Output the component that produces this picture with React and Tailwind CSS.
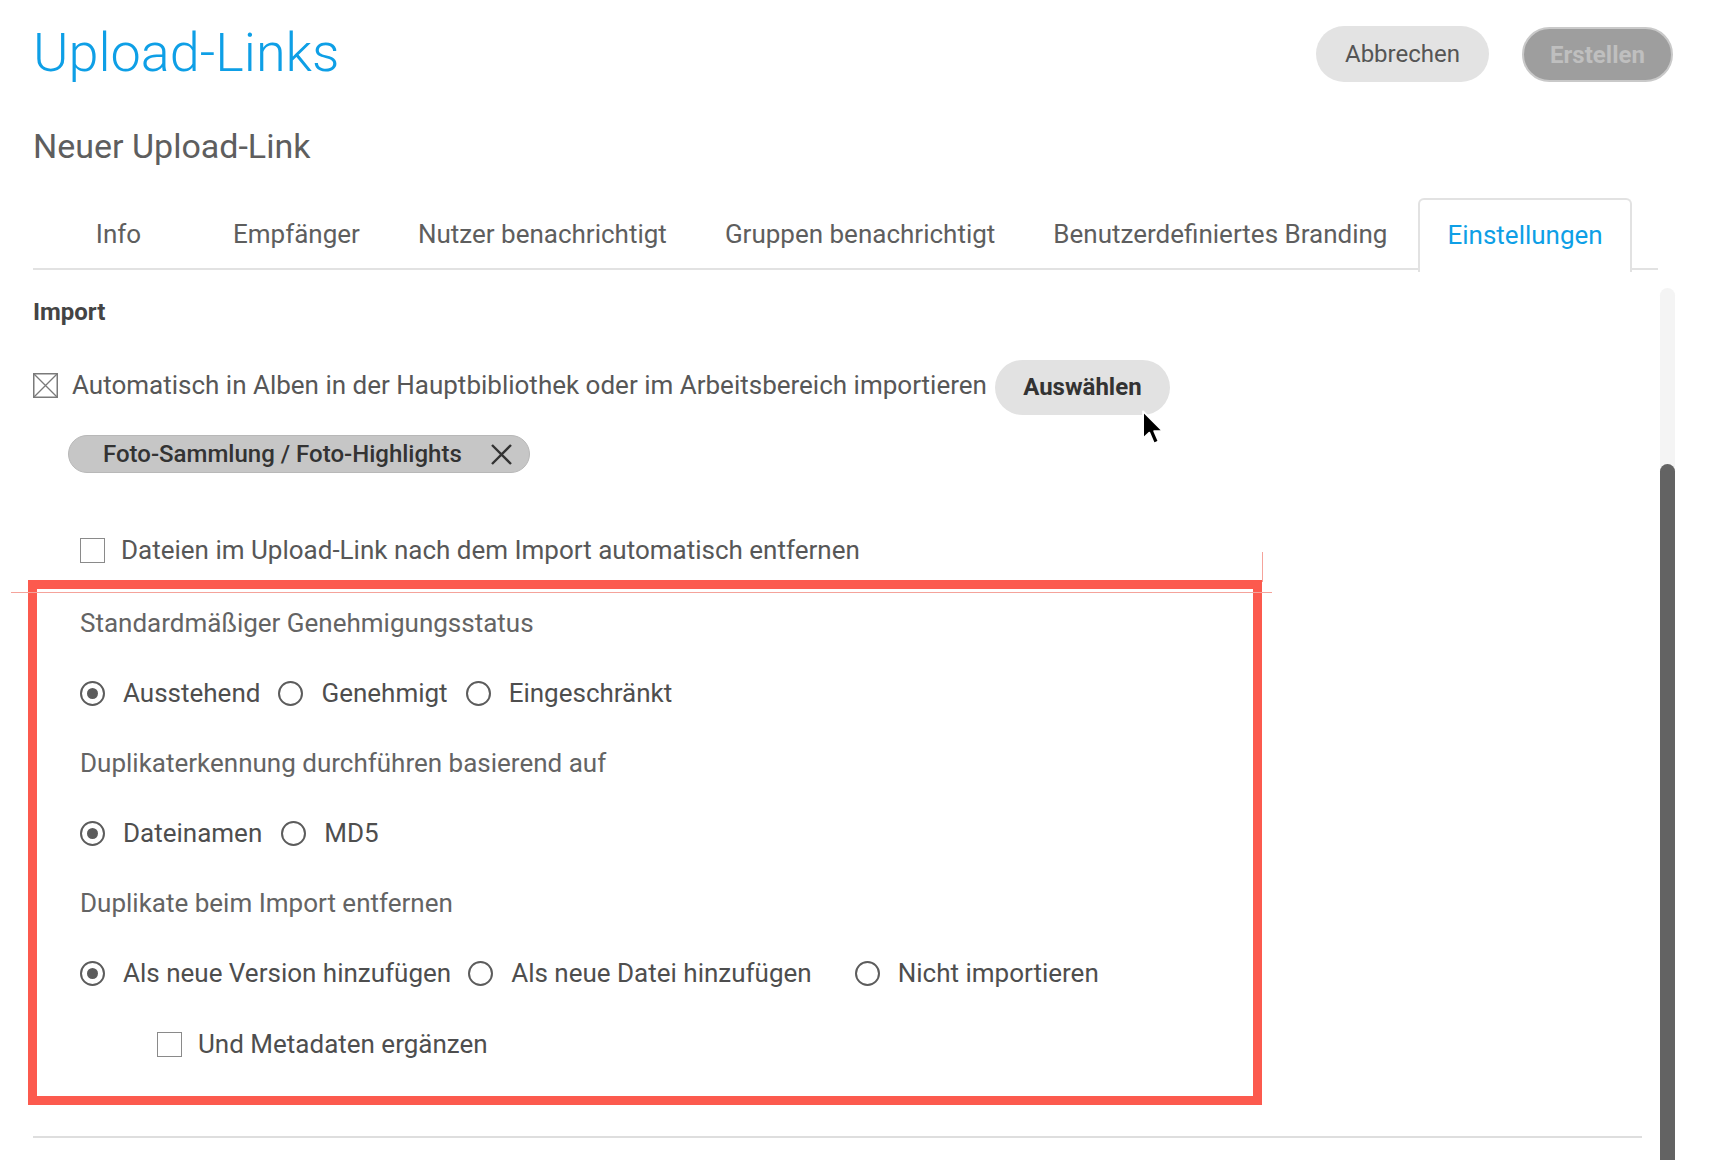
import React from "react";

const Radio = ({ checked }) => (
  <span className="w-[25px] h-[25px] rounded-full border-[2.5px] border-[#5c5c5c] flex items-center justify-center shrink-0">
    {checked && <span className="w-[11px] h-[11px] rounded-full bg-[#5c5c5c]" />}
  </span>
);

const Box = () => (
  <span className="w-[25px] h-[25px] border-[1.5px] border-[#8a8a8a] bg-white shrink-0 block" />
);

const CrossBox = () => (
  <svg width="25" height="25" viewBox="0 0 25 25" className="shrink-0">
    <rect x="0.75" y="0.75" width="23.5" height="23.5" fill="white" stroke="#7a7a7a" strokeWidth="1.5" />
    <path d="M1 1 L24 24 M24 1 L1 24" stroke="#7a7a7a" strokeWidth="1.3" />
  </svg>
);

const RadioOpt = ({ checked, label, className = "" }) => (
  <div className={"flex items-center gap-[18px] " + className}>
    <Radio checked={checked} />
    <span className="text-[26px] leading-none text-[#4e4e4e]">{label}</span>
  </div>
);

export default function App() {
  const tabs = ["Info", "Empfänger", "Nutzer benachrichtigt", "Gruppen benachrichtigt", "Benutzerdefiniertes Branding"];
  return (
    <div className="relative w-[1720px] h-[1160px] overflow-hidden bg-white font-['Roboto',sans-serif] text-[#5a5a5a]">
      {/* Header */}
      <div className="flex justify-between items-start pl-[33px] pr-[47px] pt-[26px]">
        <h1 className="text-[54px] leading-none font-light text-[#0e9fe6]">Upload-Links</h1>
        <div className="flex gap-[33px]">
          <button className="w-[173px] h-[56px] rounded-full bg-[#e3e3e3] text-[24px] leading-none text-[#555555]">Abbrechen</button>
          <button className="mt-[1px] w-[151px] h-[55px] rounded-full bg-[#9e9e9e] border-2 border-[#c9c9c9] text-[24px] leading-none font-bold text-[#bfbfbf]">Erstellen</button>
        </div>
      </div>

      <div className="pl-[33px] mt-[47px] text-[34px] leading-none text-[#5e5e5e]">Neuer Upload-Link</div>

      {/* Tabs */}
      <div className="ml-[33px] w-[1625px] mt-[35px] flex border-b-2 border-[#e2e2e2] h-[72px]">
        {tabs.map((t, i) => (
          <div
            key={t}
            className={
              "h-[72px] flex items-center justify-center text-[26px] leading-none text-[#5e5e5e] " +
              (i === 0 ? "w-[171px]" : "px-[29px]")
            }
          >
            {t}
          </div>
        ))}
        <div className="h-[74px] ml-[2px] px-[27px] pb-[3px] flex items-center justify-center text-[26px] leading-none text-[#0e9fe6] border-2 border-b-0 border-[#e2e2e2] rounded-t-[6px] bg-white -mb-[2px]">
          Einstellungen
        </div>
      </div>

      {/* Content */}
      <div className="flex flex-col">
        <div className="h-[84px] flex items-center pl-[33px]">
          <span className="text-[24px] font-bold text-[#444444] leading-none">Import</span>
        </div>
        <div className="h-[62px] flex items-center pl-[33px]">
          <CrossBox />
          <span className="ml-[14px] text-[26px] leading-none text-[#575757]">
            Automatisch in Alben in der Hauptbibliothek oder im Arbeitsbereich importieren
          </span>
          <button className="ml-[8px] mt-[4px] w-[175px] h-[55px] rounded-full bg-[#e2e2e2] text-[24px] leading-none font-bold text-[#333333]">
            Auswählen
          </button>
        </div>
        <div className="h-[76px] flex items-center pl-[68px]">
          <div className="h-[38px] w-[462px] rounded-full bg-[#c6c6c6] border border-[#b8b8b8] flex items-center pl-[34px] pr-[16px] justify-between">
            <span className="text-[24px] font-medium leading-none text-[#333333]">Foto-Sammlung / Foto-Highlights</span>
            <svg width="23" height="23" viewBox="0 0 23 23">
              <path d="M2 2 L21 21 M21 2 L2 21" stroke="#333" strokeWidth="2.4" />
            </svg>
          </div>
        </div>
        <div className="h-[28px]" />
        <div className="h-[60px] flex items-center pl-[80px]">
          <Box />
          <span className="ml-[16px] text-[26px] leading-none text-[#575757]">
            Dateien im Upload-Link nach dem Import automatisch entfernen
          </span>
        </div>
        <div className="h-[8px]" />

        <div className="h-[70px] flex items-center pl-[80px]">
          <span className="text-[26px] leading-none text-[#646464]">Standardmäßiger Genehmigungsstatus</span>
        </div>
        <div className="h-[70px] flex items-center pl-[80px] gap-[18px]">
          <RadioOpt checked label="Ausstehend" />
          <RadioOpt label="Genehmigt" />
          <RadioOpt label="Eingeschränkt" />
        </div>
        <div className="h-[70px] flex items-center pl-[80px]">
          <span className="text-[26px] leading-none text-[#646464]">Duplikaterkennung durchführen basierend auf</span>
        </div>
        <div className="h-[70px] flex items-center pl-[80px] gap-[19px]">
          <RadioOpt checked label="Dateinamen" />
          <RadioOpt label="MD5" />
        </div>
        <div className="h-[70px] flex items-center pl-[80px]">
          <span className="text-[26px] leading-none text-[#646464]">Duplikate beim Import entfernen</span>
        </div>
        <div className="h-[70px] flex items-center pl-[80px]">
          <RadioOpt checked label="Als neue Version hinzufügen" />
          <RadioOpt label="Als neue Datei hinzufügen" className="ml-[17px]" />
          <RadioOpt label="Nicht importieren" className="ml-[43px]" />
        </div>
        <div className="h-[70px] flex items-center pl-[157px] pt-[2px]">
          <Box />
          <span className="ml-[16px] text-[26px] leading-none text-[#4e4e4e]">Und Metadaten ergänzen</span>
        </div>
        <div className="h-[58px]" />
        <div className="ml-[33px] w-[1609px] h-[2px] bg-[#dedede]" />
      </div>

      {/* Scrollbar */}
      <div className="absolute left-[1660px] top-[288px] w-[15px] h-[900px] rounded-full bg-[#f4f4f4]" />
      <div className="absolute left-[1660px] top-[464px] w-[15px] h-[720px] rounded-full bg-[#636363]" />

      {/* Annotation */}
      <div className="absolute left-[28px] top-[580px] w-[1234px] h-[525px] border-[9px] border-[#fc5a4e]" />
      <div className="absolute left-[11px] top-[592px] w-[1261px] h-[1px] bg-[#f5a39b]" />
      <div className="absolute left-[1262px] top-[552px] w-[1px] h-[30px] bg-[#f5a39b]" />

      {/* Cursor */}
      <svg className="absolute left-[1141px] top-[410px]" width="27" height="38" viewBox="0 0 26 36">
        <path d="M2 1 L2 27 L8 21.5 L12.5 32 L17 30 L12.7 20 L21 20 Z" fill="#000" stroke="#fff" strokeWidth="1.8" strokeLinejoin="round" />
      </svg>
    </div>
  );
}
